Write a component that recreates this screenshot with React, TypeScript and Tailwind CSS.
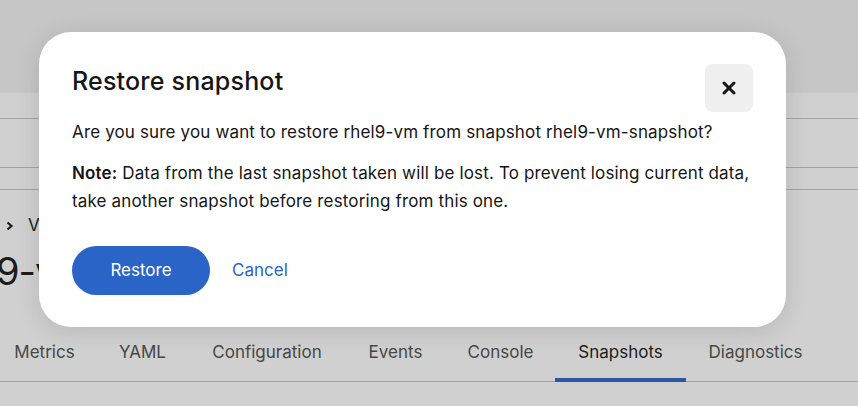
const tabs = [
  { label: 'Metrics', w: 'w-[103px]' },
  { label: 'YAML', w: 'w-[93px]' },
  { label: 'Configuration', w: 'w-[156px]' },
  { label: 'Events', w: 'w-[101px]' },
  { label: 'Console', w: 'w-[109px]' },
  { label: 'Snapshots', w: 'w-[131px]', active: true },
  { label: 'Diagnostics', w: 'w-[139px]' },
];

const App = () => {
  return (
    <div className="relative w-[858px] h-[406px] overflow-hidden bg-[#d0d0d0] font-['Inter',sans-serif] text-[#151515]">
      {/* page behind the backdrop */}
      <div className="h-[93px] bg-[#c6c6c6]" />
      <div className="h-[26px] border-b border-[#a3a3a3]" />
      <div className="h-[49px] border-b border-[#a3a3a3]" />
      <div className="h-[22px] border-b border-[#a3a3a3]" />

      <div className="pt-[18px]">
        <div className="flex items-center h-[36px] pl-[6px] text-[17px] text-[#1c1c1c]">
          <svg width="8" height="10" viewBox="0 0 8 10" className="mr-[14px]">
            <path d="M1.5 1.5 L5.5 5 L1.5 8.5" fill="none" stroke="#1c1c1c" strokeWidth="2.2" />
          </svg>
          <span>VirtualMachines</span>
        </div>
        <div className="h-[54px] flex items-center -ml-[4px] text-[38px] leading-none tracking-[-1px] text-[#1c1c1c]">
          9-vm
        </div>
      </div>

      <div className="flex h-[52px] mt-[32px] -ml-[7px] border-b border-[#a3a3a3]">
        {tabs.map((t) => (
          <div
            key={t.label}
            className={`${t.w} shrink-0 relative flex items-center justify-center pb-[6px] text-[17px] ${
              t.active ? 'text-[#1c1c1c]' : 'text-[#474747]'
            }`}
          >
            {t.label}
            {t.active && <div className="absolute left-0 right-0 -bottom-px h-[4px] bg-[#2b56a4]" />}
          </div>
        ))}
      </div>

      {/* modal */}
      <div className="absolute left-[39px] top-[32px] w-[747px] h-[295px] bg-white rounded-[32px] shadow-[0_4px_24px_rgba(0,0,0,0.12)] px-[33px] pt-[32px]">
        <div className="flex justify-between items-start">
          <h1 className="mt-[1px] text-[25px] leading-[32px] font-medium tracking-[0.2px]">
            Restore snapshot
          </h1>
          <button className="w-[48px] h-[48px] rounded-[8px] bg-[#f0f0f0] flex items-center justify-center">
            <svg width="14" height="14" viewBox="0 0 14 14">
              <path d="M2 2 L12 12 M12 2 L2 12" stroke="#151515" strokeWidth="3" strokeLinecap="round" />
            </svg>
          </button>
        </div>
        <div className="mt-[6px] text-[17px] leading-[28px] tracking-[0.15px]">
          <p>Are you sure you want to restore rhel9-vm from snapshot rhel9-vm-snapshot?</p>
          <p className="mt-[13px]">
            <span className="font-semibold">Note:</span> Data from the last snapshot taken will be lost. To prevent
            losing current data, take another snapshot before restoring from this one.
          </p>
        </div>
        <div className="flex items-center mt-[31px] gap-[22px]">
          <button className="w-[138px] h-[49px] rounded-full bg-[#2b64c7] text-white text-[17px]">
            Restore
          </button>
          <button className="text-[#2b64c7] text-[17px]">Cancel</button>
        </div>
      </div>
    </div>
  );
};

export default App;
